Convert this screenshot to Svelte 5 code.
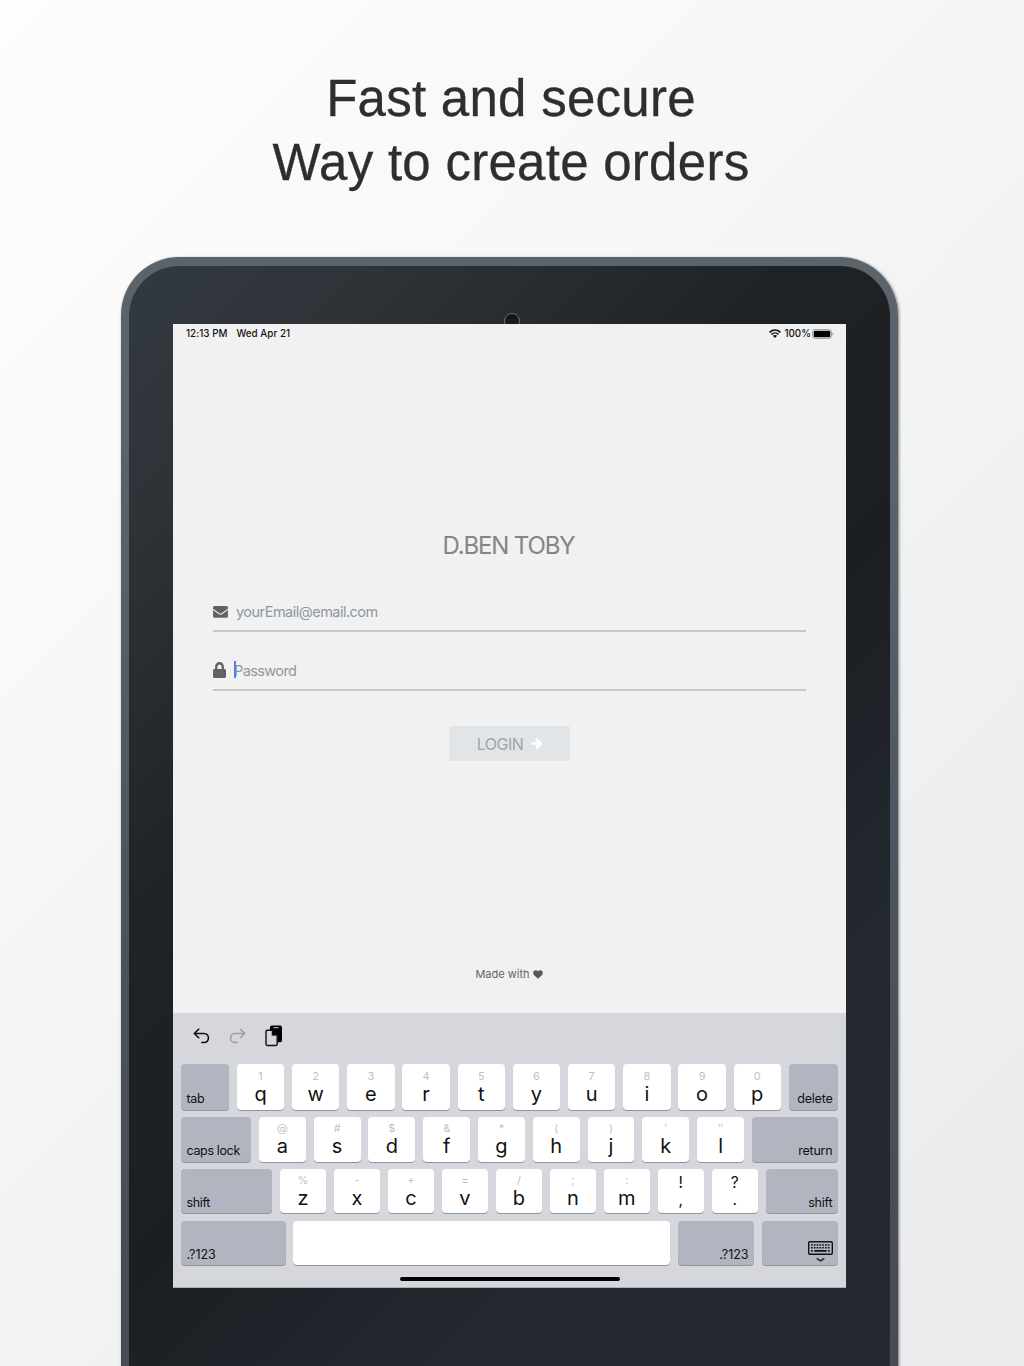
<script>
  const rows = [
    {
      name: 'top',
      left: 'tab',
      right: 'delete',
      keys: [['1', 'q'], ['2', 'w'], ['3', 'e'], ['4', 'r'], ['5', 't'], ['6', 'y'], ['7', 'u'], ['8', 'i'], ['9', 'o'], ['0', 'p']]
    },
    {
      name: 'home',
      left: 'caps lock',
      right: 'return',
      keys: [['@', 'a'], ['#', 's'], ['$', 'd'], ['&', 'f'], ['*', 'g'], ['(', 'h'], [')', 'j'], ['′', 'k'], ['″', 'l']]
    },
    {
      name: 'bottom',
      left: 'shift',
      right: 'shift',
      keys: [['%', 'z'], ['-', 'x'], ['+', 'c'], ['=', 'v'], ['/', 'b'], [';', 'n'], [':', 'm'], ['!', ','], ['?', '.']]
    }
  ];
  const dotColumns = [4, 6.8, 9.6, 12.4, 15.2, 18, 20.8];
</script>

<main class="page">
  <h1>Fast and secure<br />Way to create orders</h1>

  <div class="tablet">
    <div class="bezel">
      <span class="camera"></span>
      <section class="screen">
        <header class="status">
          <span class="time">12:13 PM</span>
          <span class="date">Wed Apr 21</span>
          <svg class="wifi" viewBox="0 0 12 9" width="12" height="9">
            <path d="M.6 3.400C3.800.4 8.200.4 11.400 3.400M2.500 5.400c2-1.900 5-1.900 7 0" fill="none" stroke="#111" stroke-width="1.650" />
            <path d="M3.900 6.700c1.200-1.100 3-1.100 4.200 0L6 8.900z" fill="#111" />
          </svg>
          <span class="percent">100%</span>
          <svg class="battery" viewBox="0 0 22 10" width="22" height="10">
            <rect x=".5" y=".5" width="19" height="9" rx="2.4" fill="none" stroke="#a5a5a5" />
            <rect x="1.7" y="1.7" width="16.6" height="6.6" rx="1.2" fill="#000" />
            <path d="M20.3 3.4q1.2.4 1.2 1.6t-1.2 1.6z" fill="#a5a5a5" />
          </svg>
        </header>

        <form class="login">
          <h2>D.BEN TOBY</h2>
          <div class="field">
            <svg class="mail" viewBox="0 0 15 12" width="15" height="12">
              <path fill="#626262" d="M1.500 0h12Q15 0 15 1.500v.4c0 .6-.3 1-.7 1.300L9 6.900q-1.500 1-3 0L.7 3.200C.3 2.900 0 2.500 0 1.900v-.4Q0 0 1.500 0zM0 4.100l5.500 3.800q2 1.300 4 0L15 4.100v6.200q0 1.500-1.500 1.500h-12Q0 11.800 0 10.300z" />
            </svg>
            <span class="hint email">yourEmail@email.com</span>
          </div>
          <div class="field second">
            <svg class="lock" viewBox="0 0 448 512" width="13" height="16" preserveAspectRatio="none">
              <path fill="#626262" d="M400 224h-24v-72C376 68.200 307.800 0 224 0S72 68.200 72 152v72H48c-26.500 0-48 21.500-48 48v192c0 26.500 21.500 48 48 48h352c26.500 0 48-21.500 48-48V272c0-26.500-21.500-48-48-48zm-104 0H152v-72c0-39.700 32.300-72 72-72s72 32.300 72 72v72z" />
            </svg>
            <span class="hint password"><i class="caret"></i>Password</span>
          </div>
          <div class="button">
            <span>LOGIN</span>
            <svg viewBox="0 0 11 11" width="11" height="11">
              <path d="M.4 5.500H9M5 .9l4.600 4.600L5 10.100" fill="none" stroke="#fff" stroke-width="2.600" />
            </svg>
          </div>
        </form>

        <footer class="made">
          <span>Made with</span>
          <svg viewBox="0 0 10 9" width="10" height="9">
            <path d="M5 8.800.9 4.900C-.5 3.300.2.300 2.700.300 3.900.300 4.600.900 5 1.500 5.400.900 6.100.300 7.300.300 9.800.300 10.500 3.300 9.100 4.900z" fill="#595959" />
          </svg>
        </footer>

        <div class="keyboard">
          <div class="tools">
            <svg width="18" height="16" viewBox="0 0 18 16" fill="none" stroke="#111" stroke-width="1.6" stroke-linecap="round" stroke-linejoin="round">
              <path d="M5.700 1.200 1.300 5.500l4.400 4.300M1.600 5.500h9.300c6 0 6 9 0 9H8.800" />
            </svg>
            <svg width="18" height="16" viewBox="0 0 18 16" fill="none" stroke="#999b9f" stroke-width="1.400" stroke-linecap="round" stroke-linejoin="round">
              <path d="m11.300 1.200 4.400 4.300-4.400 4.300M15.400 5.500H6.100c-6 0-6 9 0 9h2.100" />
            </svg>
            <svg class="paste" width="18" height="22" viewBox="0 0 18 22">
              <rect x="5" y=".6" width="12" height="16.700" rx="1.800" fill="#000" />
              <path d="M8.300 2.700h5.400" stroke="#c9cbd0" stroke-width="1" />
              <path d="M2.400 5.200h4.300l5.500 5.500v8.400c0 .9-.5 1.400-1.400 1.400H2.400c-.9 0-1.400-.5-1.400-1.400V6.600c0-.9.5-1.400 1.400-1.400z" fill="#d5d7dc" stroke="#111" stroke-width="1.400" />
              <path d="M6.500 5v6.100h6z" fill="#000" />
              <path d="M6.600 5.900v5h5" fill="none" stroke="#b9bbc0" stroke-width=".8" />
            </svg>
          </div>

          {#each rows as row}
            <div class="row {row.name}">
              <div class="key dark first">{row.left}</div>
              {#each row.keys as [alt, main]}
                <div class="key letter" class:punct={main === ',' || main === '.'}>
                  <small>{alt}</small>
                  <b>{main}</b>
                </div>
              {/each}
              <div class="key dark last">{row.right}</div>
            </div>
          {/each}

          <div class="row space">
            <div class="key dark first">.?123</div>
            <div class="key bar"></div>
            <div class="key dark last">.?123</div>
            <div class="key dark last">
              <svg class="hide" width="25" height="22" viewBox="0 0 25 22">
                <rect x=".7" y=".7" width="23.600" height="12.600" rx="1.200" fill="none" stroke="#111" stroke-width="1.400" />
                {#each dotColumns as x}
                  <path d="M{x - 1} 4h1.700M{x - 1} 6.800h1.700" stroke="#111" stroke-width="1.600" />
                {/each}
                <path d="M3 9.900h1.700M6.200 9.900h12.500M20 9.900h1.700" stroke="#111" stroke-width="1.600" />
                <path d="m8.700 17.300 3.800 2.500 3.800-2.500" fill="none" stroke="#222" stroke-width="1.400" />
              </svg>
            </div>
          </div>
          <div class="home-bar"></div>
        </div>
      </section>
    </div>
  </div>
</main>

<style>
  :global(body) { margin: 0; }
  * { box-sizing: border-box; }

  .page {
    width: 1024px;
    height: 1366px;
    overflow: hidden;
    padding-top: 67px;
    background: linear-gradient(135deg, #fefdfe 0%, #f8f8f8 30%, #eeeff0 72%, #eaebed 100%);
    font-family: Inter, "Noto Sans", sans-serif;
  }

  h1 {
    height: 190px;
    margin: 0;
    padding-right: 2px;
    font: 400 51px/64px "Liberation Sans", Arial, sans-serif;
    letter-spacing: 0.27px;
    text-align: center;
    color: #2e2e30;
    -webkit-text-stroke: 0.3px #2e2e30;
  }

  .tablet {
    width: 777px;
    height: 1200px;
    margin-left: 121px;
    padding: 8.500px 8px 0;
    border-radius: 58px 58px 0 0;
    background: linear-gradient(180deg, #5b636b 0%, #59616b 24%, #4c545f 52%, #484a56 90%);
    box-shadow: 1px 1px 3px rgba(0, 0, 0, 0.5);
  }

  .bezel {
    position: relative;
    height: 1192px;
    padding: 58.500px 44px 0;
    border-radius: 50px 50px 0 0;
    background: linear-gradient(135deg, #333941 0%, #2e3338 13%, #1f2326 34%, #1b1e22 52%, #242931 73%, #242830 100%);
  }

  .camera {
    position: absolute;
    top: 47px;
    left: 375px;
    width: 16px;
    height: 16px;
    border: 1px solid #6d6e71;
    border-radius: 50%;
    background: linear-gradient(#101113, #222427);
  }

  .screen {
    position: relative;
    display: flex;
    flex-direction: column;
    width: 673px;
    height: 963.500px;
    background: #f1f1f1;
  }

  .status {
    display: flex;
    align-items: center;
    height: 20px;
    padding: 0 12px 1px 13px;
    font-size: 9.800px;
    font-weight: 500;
    letter-spacing: 0.04px;
    color: #111;
    white-space: nowrap;
  }
  .date { margin-left: 9px; }
  .wifi { margin-left: auto; }
  .percent { margin: 0 1px 0 3px; }

  .login {
    display: flex;
    flex-direction: column;
    padding: 184px 40px 0;
  }
  h2 {
    height: 61px;
    margin: 0;
    padding-right: 2px;
    font-size: 24px;
    font-weight: 400;
    line-height: 36px;
    letter-spacing: -1.15px;
    text-align: center;
    color: #858585;
  }
  .field {
    display: flex;
    align-items: center;
    height: 43px;
    padding-top: 3px;
    border-bottom: 2px solid #c2c7cb;
  }
  .second { height: 59px; padding-top: 20px; }
  .mail { margin-top: 1px; }
  .lock { margin-bottom: 2px; }
  .hint {
    font-size: 14.500px;
    color: #8c98a4;
    letter-spacing: -0.52px;
  }
  .email { margin-left: 8px; }
  .password { position: relative; margin-left: 8px; letter-spacing: -0.6px; }
  .caret {
    position: absolute;
    top: -1px;
    left: 0;
    width: 2px;
    height: 17px;
    background: #5c78f0;
  }
  .button {
    display: flex;
    align-items: center;
    align-self: center;
    justify-content: center;
    gap: 8px;
    width: 121px;
    height: 35px;
    margin-top: 35px;
    padding-top: 1px;
    border-radius: 2px;
    background: #e1e5e8;
    font-size: 16px;
    letter-spacing: -0.5px;
    color: #9fa5aa;
  }
  .button svg { margin-bottom: 1px; }

  .made {
    display: flex;
    align-items: center;
    justify-content: center;
    gap: 3px;
    height: 78px;
    margin-top: auto;
    padding-right: 1px;
    font-size: 11px;
    color: #666;
  }

  .keyboard {
    display: flex;
    flex-direction: column;
    height: 274.500px;
    padding: 0 8px;
    border-bottom: 1px solid #aaadb3;
    background: #d5d7dc;
  }
  .tools {
    display: flex;
    align-items: center;
    gap: 18px;
    height: 51px;
    padding: 0 0 5px 12px;
  }

  .row {
    display: grid;
    column-gap: 7.900px;
    height: 44.800px;
    margin-bottom: 6.900px;
    flex: none;
  }
  .top { grid-template-columns: 48px repeat(10, 47.300px) 1fr; height: 46.400px; }
  .home { grid-template-columns: 70px repeat(9, 46.900px) 1fr; }
  .bottom { grid-template-columns: 91px repeat(9, 46.100px) 1fr; }
  .space { grid-template-columns: 104.500px 377.200px 76px 1fr; column-gap: 7.700px; margin-bottom: 0; }

  .key {
    display: flex;
    min-width: 0;
    border-radius: 4px;
    background: #fff;
    box-shadow: 0 1px 0 #92959b;
    color: #111;
  }
  .row .key { height: calc(100% - 0.500px); }
  .dark {
    align-items: flex-end;
    padding: 0 5.500px 3px;
    background: #b1b5c0;
    font-size: 12.500px;
    line-height: 17px;
    letter-spacing: -0.2px;
    white-space: nowrap;
  }
  .home .dark, .bottom .dark, .space .dark { padding-bottom: 2.300px; }
  .first { letter-spacing: -0.35px; }
  .space .dark { letter-spacing: 0; }
  .last { justify-content: flex-end; }
  .letter {
    flex-direction: column;
    align-items: center;
    padding-top: 5px;
  }
  .letter small {
    font-size: 11px;
    line-height: 14px;
    color: #bfbfbf;
  }
  .letter b {
    font-size: 20px;
    font-weight: 400;
    line-height: 22px;
  }
  .home .letter { padding-top: 3.500px; }
  .bottom .letter { padding-top: 4.200px; }
  .punct small { font-size: 15.500px; line-height: 20px; color: #111; }
  .punct b { font-size: 15.500px; line-height: 19px; margin-top: -3px; }

  .home-bar {
    align-self: center;
    flex: none;
    width: 220px;
    height: 4px;
    margin-top: 11.500px;
    border-radius: 2px;
    background: #000;
  }
</style>
